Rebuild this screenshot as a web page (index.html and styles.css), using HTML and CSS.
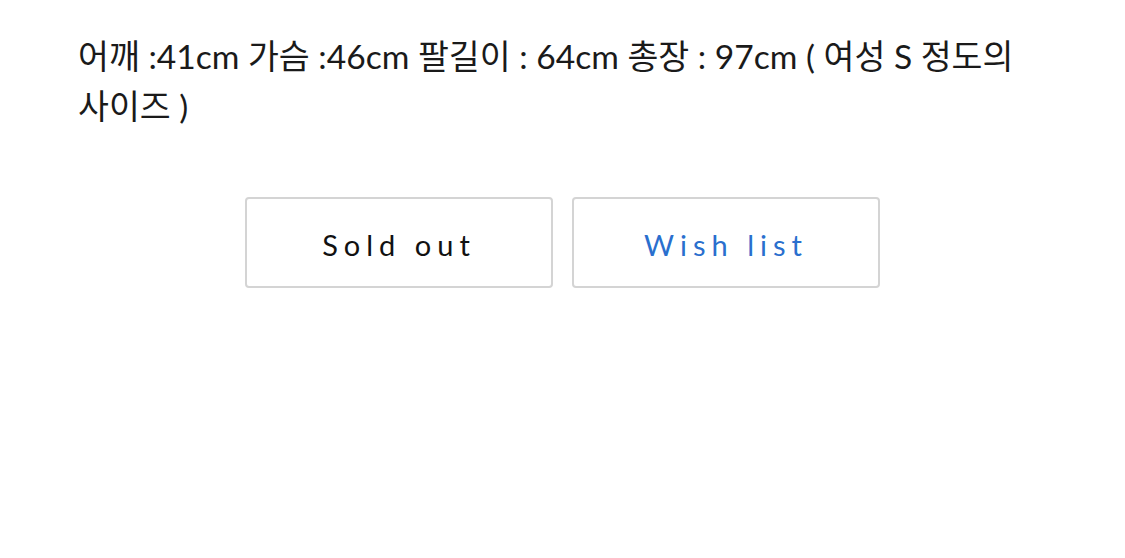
FILE: index.html
```html
<!DOCTYPE html>
<html lang="ko">
<head>
<meta charset="utf-8">
<link rel="stylesheet" href="styles.css">
</head>
<body>
<div class="page">
  <p class="desc">어깨 :41cm 가슴 :46cm 팔길이 : 64cm 총장 : 97cm ( 여성 S 정도의 사이즈 )</p>
  <div class="actions">
    <button class="btn sold">Sold out</button>
    <button class="btn wish">Wish list</button>
  </div>
</div>
</body>
</html>
```

FILE: styles.css
```css
html, body {
  margin: 0;
  padding: 0;
  background: #ffffff;
}
.page {
  padding: 31px 78px 0 78px;
}
.desc {
  margin: 0;
  font-family: "Lato", "Noto Sans CJK KR", sans-serif;
  font-size: 33.6px;
  line-height: 50px;
  color: #1a1a1a;
  word-break: keep-all;
}
.actions {
  display: flex;
  justify-content: center;
  gap: 19px;
  margin-top: 66px;
}
.btn {
  box-sizing: border-box;
  width: 308px;
  height: 91px;
  background: #fff;
  border: 2px solid #d4d4d4;
  border-radius: 4px;
  font-family: "Lato", sans-serif;
  font-size: 29px;
  letter-spacing: 6px;
  padding: 4px 0 0 0;
}
.sold { color: #111111; }
.wish { color: #2a6fce; }
```
